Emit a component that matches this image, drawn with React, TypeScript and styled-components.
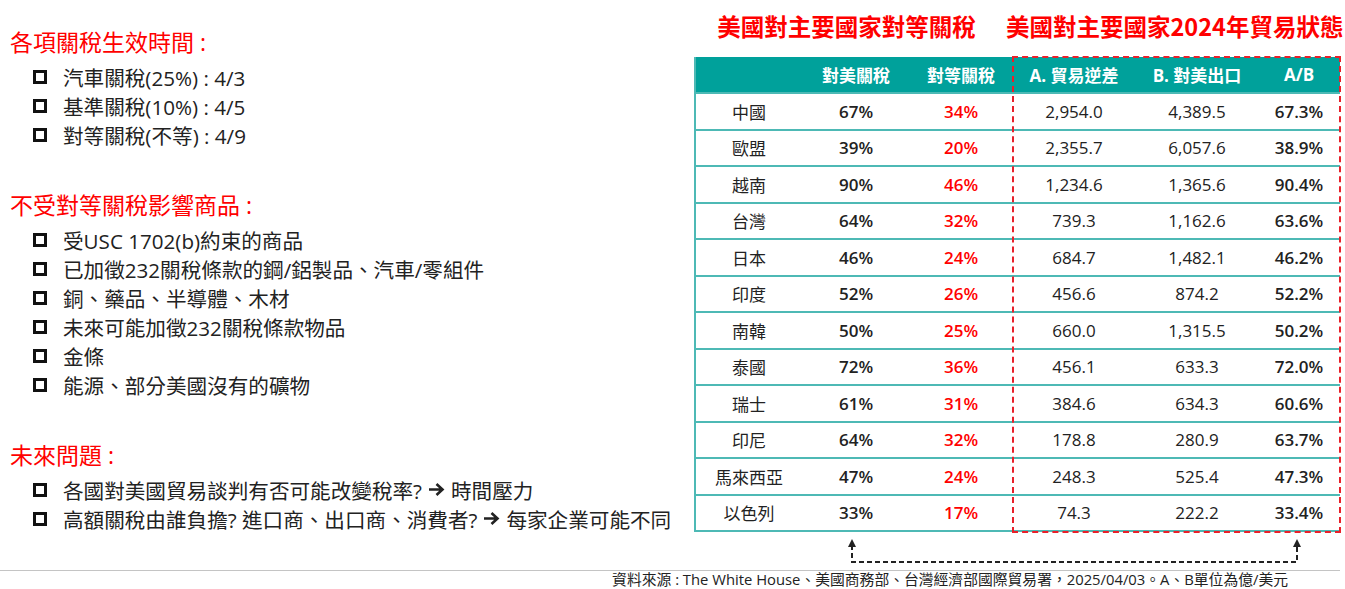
import styled, { createGlobalStyle } from "styled-components";

const GlobalStyle = createGlobalStyle`
  html, body {
    margin: 0;
    padding: 0;
    background: #ffffff;
  }
  body {
    font-family: "Open Sans", "Noto Sans CJK TC", sans-serif;
    color: #222222;
  }
`;

const Page = styled.div`
  width: 1345px;
  height: 589px;
  overflow: hidden;
  display: flex;
  flex-direction: column;
`;

const Main = styled.div`
  display: flex;
  align-items: flex-start;
`;

const LeftColumn = styled.div`
  width: 684px;
  padding: 27px 0 0 10px;
  display: flex;
  flex-direction: column;
  gap: 41px;
`;

const Section = styled.section`
  display: flex;
  flex-direction: column;
  gap: 5px;
`;

const Heading = styled.h2`
  margin: 0;
  font-size: 23px;
  line-height: 30px;
  font-weight: 400;
  color: #ff0000;
  white-space: nowrap;
`;

const List = styled.ul`
  margin: 0;
  padding: 0 0 0 23px;
  list-style: none;
`;

const Item = styled.li`
  display: flex;
  align-items: center;
  gap: 16px;
  height: 29px;
  font-size: 20.6px;
  color: #222222;
  white-space: nowrap;
`;

const Box = styled.span`
  width: 14px;
  height: 14px;
  box-sizing: border-box;
  border: 3px solid #111111;
  flex: none;
`;

const Text = styled.span`
  display: inline-flex;
  align-items: center;
  gap: 6px;
`;

const RightArrow = () => (
  <svg width="17" height="15" viewBox="0 0 17 15" aria-hidden="true">
    <path
      d="M1 7.5 H14 M8.5 2 L14.5 7.5 L8.5 13"
      fill="none"
      stroke="#222"
      strokeWidth="2.6"
      strokeLinejoin="miter"
    />
  </svg>
);

const RightColumn = styled.div`
  width: 646px;
  padding-top: 12px;
  display: flex;
  flex-direction: column;
`;

const Titles = styled.div`
  display: grid;
  grid-template-columns: 318px 328px;
  margin-bottom: 17px;
`;

const Title = styled.h1<{ $shift?: number }>`
  margin: 0 0 0 ${(p) => p.$shift ?? 0}px;
  font-size: 23.5px;
  line-height: 28px;
  font-weight: 700;
  color: #ff0000;
  text-align: center;
  white-space: nowrap;
  font-family: "Noto Sans CJK TC", sans-serif;
`;

const TableWrap = styled.div`
  position: relative;
  border-left: 2px solid #4db9b5;
`;

const Row = styled.div<{ $head?: boolean }>`
  display: grid;
  grid-template-columns: 106px 108px 102px 124px 122px 82px;
  height: ${(p) => (p.$head ? "37px" : "36.5px")};
  box-sizing: border-box;
  align-items: center;
  background: ${(p) => (p.$head ? "#00a19b" : "#ffffff")};
  border-bottom: 2px solid #4db9b5;
`;

const HeadCell = styled.div`
  text-align: center;
  color: #ffffff;
  font-weight: 700;
  font-size: 17px;
  white-space: nowrap;
`;

const Cell = styled.div<{ $tone?: "plain" | "strong" | "red" }>`
  text-align: center;
  font-size: 17px;
  white-space: nowrap;
  color: ${(p) => (p.$tone === "red" ? "#ff0000" : "#222222")};
  font-weight: ${(p) => (p.$tone === "strong" || p.$tone === "red" ? 600 : 400)};
`;

const DashedBox = styled.div`
  position: absolute;
  left: 316px;
  top: -1px;
  right: -1px;
  bottom: -1px;
  border: 2px dashed #e8202a;
  pointer-events: none;
`;

const Connector = styled.svg`
  display: block;
  width: 646px;
  height: 38px;
`;

const Footer = styled.footer`
  border-top: 1px solid #c4c4c4;
  width: 1340px;
  text-align: right;
  padding: 0 52px 0 0;
  box-sizing: border-box;
  font-size: 14.8px;
  line-height: 16px;
  color: #222222;
  white-space: nowrap;
`;

const rows = [
  ["中國", "67%", "34%", "2,954.0", "4,389.5", "67.3%"],
  ["歐盟", "39%", "20%", "2,355.7", "6,057.6", "38.9%"],
  ["越南", "90%", "46%", "1,234.6", "1,365.6", "90.4%"],
  ["台灣", "64%", "32%", "739.3", "1,162.6", "63.6%"],
  ["日本", "46%", "24%", "684.7", "1,482.1", "46.2%"],
  ["印度", "52%", "26%", "456.6", "874.2", "52.2%"],
  ["南韓", "50%", "25%", "660.0", "1,315.5", "50.2%"],
  ["泰國", "72%", "36%", "456.1", "633.3", "72.0%"],
  ["瑞士", "61%", "31%", "384.6", "634.3", "60.6%"],
  ["印尼", "64%", "32%", "178.8", "280.9", "63.7%"],
  ["馬來西亞", "47%", "24%", "248.3", "525.4", "47.3%"],
  ["以色列", "33%", "17%", "74.3", "222.2", "33.4%"],
];

const tones: ("plain" | "strong" | "red")[] = ["plain", "strong", "red", "plain", "plain", "strong"];

export default function App() {
  return (
    <Page>
      <GlobalStyle />
      <Main>
        <LeftColumn>
          <Section>
            <Heading>各項關稅生效時間 :</Heading>
            <List>
              <Item><Box />汽車關稅(25%) : 4/3</Item>
              <Item><Box />基準關稅(10%) : 4/5</Item>
              <Item><Box />對等關稅(不等) : 4/9</Item>
            </List>
          </Section>
          <Section>
            <Heading>不受對等關稅影響商品 :</Heading>
            <List>
              <Item><Box />受USC 1702(b)約束的商品</Item>
              <Item><Box />已加徵232關稅條款的鋼/鋁製品、汽車/零組件</Item>
              <Item><Box />銅、藥品、半導體、木材</Item>
              <Item><Box />未來可能加徵232關稅條款物品</Item>
              <Item><Box />金條</Item>
              <Item><Box />能源、部分美國沒有的礦物</Item>
            </List>
          </Section>
          <Section>
            <Heading>未來問題 :</Heading>
            <List>
              <Item>
                <Box />
                <Text>
                  各國對美國貿易談判有否可能改變稅率? <RightArrow /> 時間壓力
                </Text>
              </Item>
              <Item>
                <Box />
                <Text>
                  高額關稅由誰負擔? 進口商、出口商、消費者? <RightArrow /> 每家企業可能不同
                </Text>
              </Item>
            </List>
          </Section>
        </LeftColumn>

        <RightColumn>
          <Titles>
            <Title $shift={-13}>美國對主要國家對等關稅</Title>
            <Title $shift={-6}>美國對主要國家2024年貿易狀態</Title>
          </Titles>
          <TableWrap>
            <Row $head>
              <HeadCell />
              <HeadCell>對美關稅</HeadCell>
              <HeadCell>對等關稅</HeadCell>
              <HeadCell>A. 貿易逆差</HeadCell>
              <HeadCell>B. 對美出口</HeadCell>
              <HeadCell>A/B</HeadCell>
            </Row>
            {rows.map((r) => (
              <Row key={r[0]}>
                {r.map((v, i) => (
                  <Cell key={i} $tone={tones[i]}>
                    {v}
                  </Cell>
                ))}
              </Row>
            ))}
            <DashedBox />
          </TableWrap>
          <Connector viewBox="0 0 646 38">
            <path
              d="M158 13 V30 H603 V13"
              fill="none"
              stroke="#222"
              strokeWidth="2"
              strokeDasharray="5 3"
            />
            <path d="M158 7 L154 15 L162 15 Z" fill="#222" />
            <path d="M603 7 L599 15 L607 15 Z" fill="#222" />
          </Connector>
        </RightColumn>
      </Main>
      <Footer>
        資料來源 : The White House、美國商務部、台灣經濟部國際貿易署，2025/04/03。A、B單位為億/美元
      </Footer>
    </Page>
  );
}
